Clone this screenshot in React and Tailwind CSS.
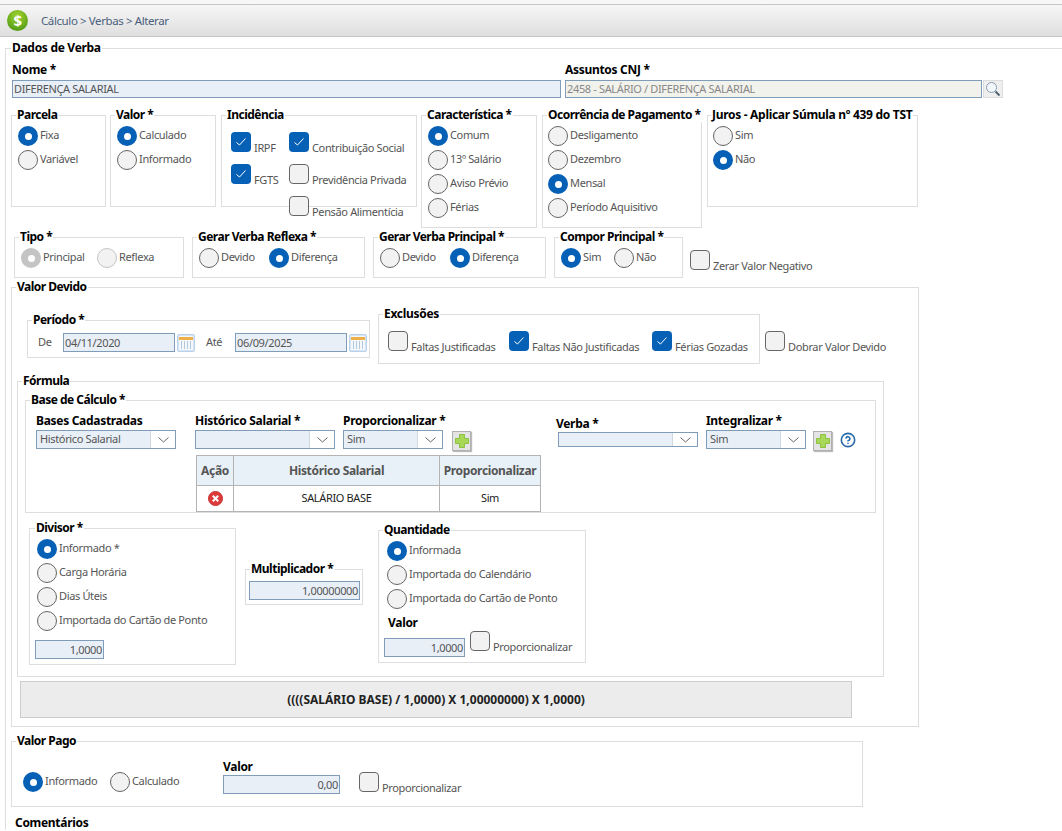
import React from "react";
import { CircleHelp } from "lucide-react";

const Box = ({ legend, className, legendClass = "left-[4px] tracking-[-0.5px]", children }) => (
  <div className={`relative shrink-0 border border-[#dedede] ${className}`}>
    <span className={`absolute -top-[8px] bg-white px-px text-[12px] leading-[14px] font-bold whitespace-nowrap text-black ${legendClass}`}>
      {legend}
    </span>
    {children}
  </div>
);

const Radio = ({ on, off, label, className = "" }) => (
  <div className={`flex items-center shrink-0 h-[20px] ${className}`}>
    {on ? (
      <span className={`flex items-center justify-center w-[20px] h-[20px] rounded-full shrink-0 ${off ? "bg-[#c4c4c4]" : "bg-[#0560b6]"}`}>
        <span className="w-[7px] h-[7px] rounded-full bg-white" />
      </span>
    ) : (
      <span className={`w-[20px] h-[20px] rounded-full shrink-0 bg-[#f2f2f2] border ${off ? "border-[#c4c4c4]" : "border-[#666666]"}`} />
    )}
    <span className="ml-[2px] -mt-[2px] whitespace-nowrap">{label}</span>
  </div>
);

const Check = ({ on, label, className = "" }) => (
  <div className={`flex items-start shrink-0 h-[20px] ${className}`}>
    {on ? (
      <span className="flex items-center justify-center w-[20px] h-[20px] rounded-[4px] bg-[#0560b6] shrink-0">
        <svg width="12" height="10" viewBox="0 0 12 10" fill="none" stroke="#ffffff" strokeWidth="1">
          <path d="M1.5 5.5 L4.5 8 L10.5 1.5" />
        </svg>
      </span>
    ) : (
      <span className="w-[20px] h-[20px] rounded-[4px] bg-[#f2f2f2] border border-[#666666] shrink-0" />
    )}
    <span className="ml-[3px] mt-[9px] leading-[14px] whitespace-nowrap">{label}</span>
  </div>
);

const Input = ({ value, className = "", leading = "leading-[17px]" }) => (
  <div className={`shrink-0 bg-[#e8eff7] border border-[#7f9db9] px-px text-[#555555] whitespace-nowrap ${leading} ${className}`}>
    {value}
  </div>
);

const Select = ({ value, className = "" }) => (
  <div className={`flex shrink-0 bg-[#e8eff7] border border-[#7f9db9] ${className}`}>
    <span className="flex-1 pl-[3px] leading-[16px] text-[#555555] whitespace-nowrap overflow-hidden">{value}</span>
    <span className="flex items-center justify-center w-[25px] bg-white border-l border-[#d0d8e0]">
      <svg width="11" height="6" viewBox="0 0 11 6" fill="none" stroke="#666666">
        <path d="M0.5 0.5 L5.5 5 L10.5 0.5" />
      </svg>
    </span>
  </div>
);

const Plus = ({ className = "" }) => (
  <div className={`flex items-center justify-center w-[19px] h-[20px] shrink-0 bg-[#e4e4e4] border border-[#b0b0b0] shadow-[1px_1px_1px_#bbbbbb] ${className}`}>
    <svg width="16" height="16" viewBox="0 0 16 16">
      <path d="M5.5 1.5 H10.5 V5.5 H14.5 V10.5 H10.5 V14.5 H5.5 V10.5 H1.5 V5.5 H5.5 Z" fill="#a8d858" stroke="#8cc040" strokeWidth="1" />
    </svg>
  </div>
);

const Calendar = ({ className = "" }) => (
  <div className={`flex items-center justify-center w-[18px] h-[18px] shrink-0 bg-[#d5e5f7] border border-[#bcd2ea] rounded-[2px] ${className}`}>
    <svg width="14" height="14" viewBox="0 0 14 14">
      <rect x="0" y="0" width="14" height="14" fill="#f4f8fc" />
      <rect x="0" y="1" width="14" height="3" fill="#f0b048" />
      <path d="M2.5 5 V13 M5.5 5 V13 M8.5 5 V13 M11.5 5 V13" stroke="#b4c8dc" strokeWidth="1" />
    </svg>
  </div>
);

const Label = ({ children, className = "" }) => (
  <div className={`text-[12px] leading-[14px] font-bold text-black whitespace-nowrap tracking-[-0.3px] ${className}`}>{children}</div>
);

const App = () => {
  return (
    <div className="h-[831px] overflow-hidden bg-white text-[11px] tracking-[-0.35px] text-[#555555] font-['Noto_Sans','DejaVu_Sans',sans-serif]">
      {/* cabeçalho */}
      <div className="pt-[4px] bg-[#f7f7f7]">
        <div className="flex items-center h-[33px] pl-[7px] border-y border-[#c4c4c4] bg-linear-to-b from-[#f6f6f6] to-[#dfdfdf]">
          <div className="flex items-center justify-center w-[21px] h-[21px] rounded-full bg-[radial-gradient(circle_at_50%_30%,#a4d430,#3f8f10)] text-[15px] font-bold text-white">
            $
          </div>
          <span className="ml-[13px] text-[11.5px] tracking-[-0.4px] text-[#4a5f7c]">Cálculo &gt; Verbas &gt; Alterar</span>
        </div>
      </div>

      {/* Dados de Verba */}
      <div className="relative ml-[5px] mt-[11px] pl-[5px] border-l border-t border-[#dedede]">
        <span className="absolute -top-[8px] left-[5px] bg-white px-px text-[12px] leading-[14px] font-bold tracking-[-0.3px] text-black">Dados de Verba</span>

        <div className="flex pt-[14px]">
          <div className="ml-px">
            <Label>Nome *</Label>
            <Input value="DIFERENÇA SALARIAL" leading="leading-[16px]" className="mt-[3px] w-[549px] h-[18px]" />
          </div>
          <div className="ml-[4px]">
            <Label>Assuntos CNJ *</Label>
            <div className="flex mt-[3px]">
              <Input value="2458 - SALÁRIO / DIFERENÇA SALARIAL" leading="leading-[16px]" className="w-[417px] h-[18px] bg-[#f2f2ec] text-[#888888]" />
              <div className="flex items-center justify-center ml-px w-[20px] h-[18px] bg-[#efefef] border border-[#dddddd]">
                <svg width="16" height="16" viewBox="0 0 16 16" fill="none">
                  <circle cx="6.5" cy="6.5" r="5" fill="#f2f7fc" stroke="#8b9cac" />
                  <path d="M10.5 10.5 L14.5 14.5" stroke="#50606e" strokeWidth="2" />
                </svg>
              </div>
            </div>
          </div>
        </div>

        {/* grupos */}
        <div className="flex items-start mt-[17px]">
          <Box legend="Parcela" className="w-[95px] h-[92px] pt-[10px] pl-[6px]">
            <Radio on label="Fixa" />
            <Radio label="Variável" className="mt-[4px]" />
          </Box>
          <Box legend="Valor *" className="ml-[4px] w-[106px] h-[92px] pt-[10px] pl-[6px]">
            <Radio on label="Calculado" />
            <Radio label="Informado" className="mt-[4px]" />
          </Box>
          <Box legend="Incidência" className="ml-[5px] w-[196px] h-[92px] pt-[16px] pl-[9px]">
            <div className="flex">
              <div className="w-[58px]">
                <Check on label="IRPF" />
                <Check on label="FGTS" className="mt-[12px]" />
              </div>
              <div>
                <Check on label="Contribuição Social" />
                <Check label="Previdência Privada" className="mt-[12px]" />
                <Check label="Pensão Alimentícia" className="mt-[12px]" />
              </div>
            </div>
          </Box>
          <Box legend="Característica *" className="ml-[4px] w-[116px] h-[113px] pt-[10px] pl-[6px]">
            <Radio on label="Comum" />
            <Radio label="13º Salário" className="mt-[4px]" />
            <Radio label="Aviso Prévio" className="mt-[4px]" />
            <Radio label="Férias" className="mt-[4px]" />
          </Box>
          <Box legend="Ocorrência de Pagamento *" className="ml-[5px] w-[160px] h-[113px] pt-[10px] pl-[5px]">
            <Radio label="Desligamento" />
            <Radio label="Dezembro" className="mt-[4px]" />
            <Radio on label="Mensal" className="mt-[4px]" />
            <Radio label="Período Aquisitivo" className="mt-[4px]" />
          </Box>
          <Box legend="Juros - Aplicar Súmula nº 439 do TST" legendClass="left-[3px] tracking-[-0.3px]" className="ml-[5px] w-[211px] h-[92px] pt-[10px] pl-[5px]">
            <Radio label="Sim" />
            <Radio on label="Não" className="mt-[4px]" />
          </Box>
        </div>

        <div className="flex items-start mt-[9px] ml-[3px]">
          <Box legend="Tipo *" className="w-[170px] h-[41px] pt-[10px] pl-[6px]">
            <div className="flex">
              <Radio on off label="Principal" className="w-[76px]" />
              <Radio off label="Reflexa" />
            </div>
          </Box>
          <Box legend="Gerar Verba Reflexa *" className="ml-[8px] w-[173px] h-[41px] pt-[10px] pl-[6px]">
            <div className="flex">
              <Radio label="Devido" className="w-[70px]" />
              <Radio on label="Diferença" />
            </div>
          </Box>
          <Box legend="Gerar Verba Principal *" className="ml-[8px] w-[173px] h-[41px] pt-[10px] pl-[6px]">
            <div className="flex">
              <Radio label="Devido" className="w-[70px]" />
              <Radio on label="Diferença" />
            </div>
          </Box>
          <Box legend="Compor Principal *" className="ml-[8px] w-[129px] h-[41px] pt-[10px] pl-[6px]">
            <div className="flex">
              <Radio on label="Sim" className="w-[53px]" />
              <Radio label="Não" />
            </div>
          </Box>
          <Check label="Zerar Valor Negativo" className="ml-[7px] mt-[13px]" />
        </div>

        {/* Valor Devido */}
        <Box legend="Valor Devido" className="mt-[9px] w-[908px] h-[440px]">
          <div className="flex items-start pt-[26px] pl-[15px]">
            <Box legend="Período *" className="mt-[6px] w-[343px] h-[38px]">
              <div className="flex items-center pt-[12px] pl-[10px]">
                <span className="w-[25px]">De</span>
                <Input value="04/11/2020" className="w-[112px] h-[19px]" />
                <Calendar className="ml-[2px]" />
                <span className="ml-[11px] w-[29px]">Até</span>
                <Input value="06/09/2025" className="w-[112px] h-[19px]" />
                <Calendar className="ml-[2px]" />
              </div>
            </Box>
            <Box legend="Exclusões" legendClass="left-[4px] tracking-[-0.3px]" className="ml-[8px] w-[382px] h-[50px] pt-[16px] pl-[9px]">
              <div className="flex">
                <Check label="Faltas Justificadas" className="w-[121px]" />
                <Check on label="Faltas Não Justificadas" className="w-[143px]" />
                <Check on label="Férias Gozadas" />
              </div>
            </Box>
            <Check label="Dobrar Valor Devido" className="ml-[5px] mt-[17px]" />
          </div>

          <Box legend="Fórmula" className="mt-[17px] ml-[5px] w-[867px] h-[296px]">
            <Box legend="Base de Cálculo *" className="mt-[18px] ml-[7px] w-[851px] h-[113px] pt-[13px]">
              <div className="flex items-start">
                <div className="ml-[10px] w-[140px]">
                  <Label>Bases Cadastradas</Label>
                  <Select value="Histórico Salarial" className="mt-[2px] h-[19px]" />
                </div>
                <div className="ml-[19px] w-[363px]">
                  <div className="flex items-start">
                    <div className="w-[140px]">
                      <Label>Histórico Salarial *</Label>
                      <Select value="" className="mt-[2px] h-[19px]" />
                    </div>
                    <div className="ml-[8px] w-[100px]">
                      <Label>Proporcionalizar *</Label>
                      <Select value="Sim" className="mt-[2px] h-[19px]" />
                    </div>
                    <Plus className="ml-[9px] mt-[17px]" />
                  </div>
                  <table className="mt-[4px] ml-px w-[345px] table-fixed border-collapse text-center">
                    <thead>
                      <tr className="h-[30px] bg-[#e8f0f8] text-[12px] font-bold text-[#555555]">
                        <th className="w-[37px] border border-[#b4b4b4]">Ação</th>
                        <th className="border border-[#b4b4b4]">Histórico Salarial</th>
                        <th className="w-[101px] border border-[#b4b4b4]">Proporcionalizar</th>
                      </tr>
                    </thead>
                    <tbody>
                      <tr className="h-[26px] text-[#222222]">
                        <td className="border border-[#b4b4b4]">
                          <span className="flex items-center justify-center">
                            <svg width="15" height="15" viewBox="0 0 15 15">
                              <circle cx="7.5" cy="7.5" r="7" fill="#dd3b3b" stroke="#c83030" />
                              <path d="M4.8 4.8 L10.2 10.2 M10.2 4.8 L4.8 10.2" stroke="#ffffff" strokeWidth="2" />
                            </svg>
                          </span>
                        </td>
                        <td className="border border-[#b4b4b4]">SALÁRIO BASE</td>
                        <td className="border border-[#b4b4b4]">Sim</td>
                      </tr>
                    </tbody>
                  </table>
                </div>
                <div className="w-[140px] pt-[3px]">
                  <Label className="-ml-[2px]">Verba *</Label>
                  <Select value="" className="mt-px h-[15px]" />
                </div>
                <div className="ml-[8px] w-[100px]">
                  <Label>Integralizar *</Label>
                  <Select value="Sim" className="mt-[2px] h-[19px]" />
                </div>
                <Plus className="ml-[7px] mt-[17px]" />
                <CircleHelp size={16} color="#2a6aa8" strokeWidth={2.4} className="ml-[8px] mt-[18px]" />
              </div>
            </Box>

            <div className="flex items-start">
              <Box legend="Divisor *" legendClass="left-[5px] tracking-[-0.5px]" className="mt-[15px] ml-[11px] w-[207px] h-[137px] pt-[10px] pl-[7px]">
                <Radio on label="Informado *" />
                <Radio label="Carga Horária" className="mt-[4px]" />
                <Radio label="Dias Úteis" className="mt-[4px]" />
                <Radio label="Importada do Cartão de Ponto" className="mt-[4px]" />
                <Input value="1,0000" className="mt-[9px] -ml-[2px] w-[69px] h-[19px] text-right" />
              </Box>
              <Box legend="Multiplicador *" className="mt-[56px] ml-[9px] w-[118px] h-[36px] pt-[11px] pl-[3px]">
                <Input value="1,00000000" className="w-[111px] h-[19px] text-right" />
              </Box>
              <Box legend="Quantidade" className="mt-[17px] ml-[15px] w-[208px] h-[133px] pt-[10px] pl-[8px]">
                <Radio on label="Informada" />
                <Radio label="Importada do Calendário" className="mt-[4px]" />
                <Radio label="Importada do Cartão de Ponto" className="mt-[4px]" />
                <Label className="mt-[7px] ml-px">Valor</Label>
                <div className="flex items-start">
                  <Input value="1,0000" className="mt-[8px] -ml-[3px] w-[81px] h-[19px] text-right" />
                  <Check label="Proporcionalizar" className="ml-[5px] mt-px" />
                </div>
              </Box>
            </div>
          </Box>

          <div className="flex items-center justify-center mt-[4px] ml-[8px] pt-px w-[832px] h-[37px] bg-[#ececec] border border-[#cccccc] text-[12px] tracking-normal font-bold text-[#222222]">
            ((((SALÁRIO BASE) / 1,0000) X 1,00000000) X 1,0000)
          </div>
        </Box>

        {/* Valor Pago */}
        <Box legend="Valor Pago" className="mt-[14px] w-[852px] h-[66px]">
          <div className="flex items-start pl-[11px]">
            <div className="flex mt-[30px] w-[200px]">
              <Radio on label="Informado" className="w-[87px]" />
              <Radio label="Calculado" />
            </div>
            <div className="mt-[18px]">
              <Label>Valor</Label>
              <Input value="0,00" className="mt-[1px] w-[117px] h-[19px] text-right" />
            </div>
            <Check label="Proporcionalizar" className="ml-[19px] mt-[30px]" />
          </div>
        </Box>

        <Label className="mt-[9px] ml-[4px]">Comentários</Label>
      </div>
    </div>
  );
};

export default App;
